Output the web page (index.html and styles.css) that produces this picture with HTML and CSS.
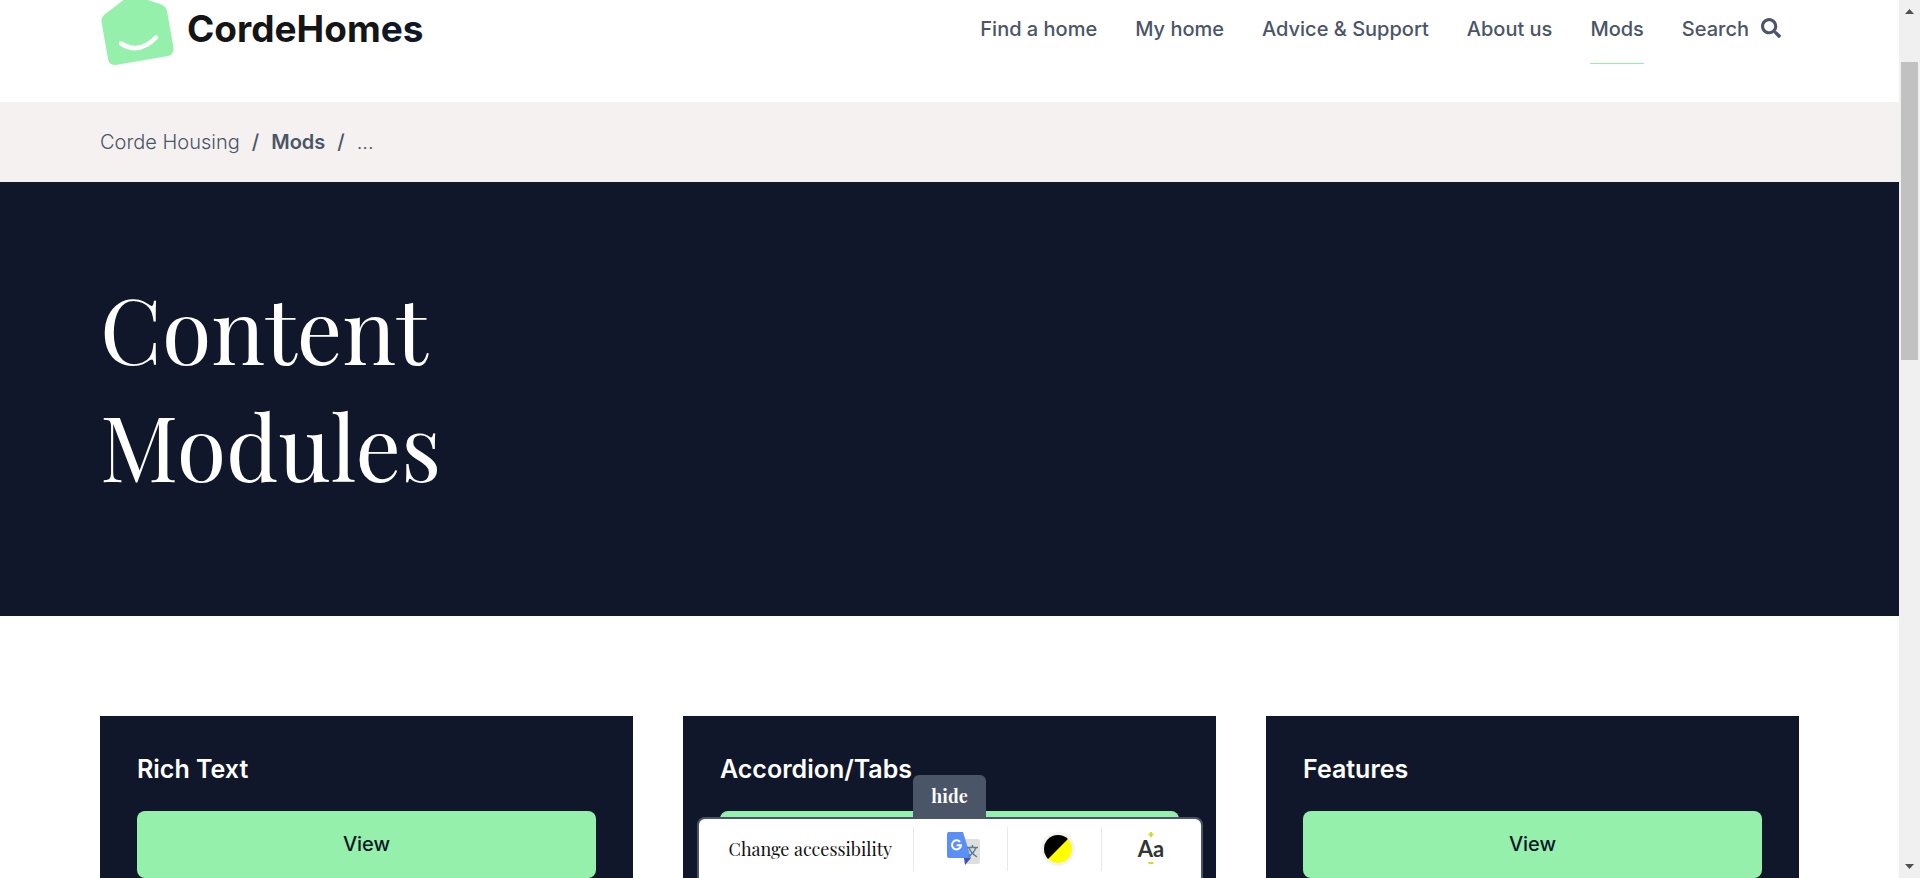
FILE: index.html
```html
<!DOCTYPE html>
<html lang="en">
<head>
<meta charset="utf-8">
<meta name="viewport" content="width=device-width, initial-scale=1">
<title>Content Modules - Corde Homes</title>
<link rel="stylesheet" href="styles.css">
</head>
<body>
<div class="page">
  <header class="header">
    <a class="logo" href="#">
      <svg class="logo-mark" viewBox="0 0 74 66" aria-hidden="true">
        <path d="M4 15 26-2Q30-5 36-4L60 4Q66 6 67 11L73.500 48Q74 54 68 56L17 64.800Q9 66 8 59L1.500 22Q1 18 4 15Z" fill="#95f0ab"/>
        <path d="M21 43.500Q39 55 56 37.500" fill="none" stroke="#fff" stroke-width="4.500" stroke-linecap="round"/>
      </svg>
      <span class="logo-text">CordeHom<span class="logo-tail">es</span></span>
    </a>
    <nav class="nav" aria-label="Main">
      <a href="#">Find a home</a>
      <a href="#">My home</a>
      <a href="#">Advice &amp; Support</a>
      <a href="#">About us</a>
      <a class="current" href="#">Mods</a>
      <a class="search" href="#">Search
        <svg viewBox="0 0 512 512" aria-hidden="true"><path fill="currentColor" d="M505 442.700 405.300 343c-4.500-4.500-10.600-7-17-7H372c27.600-35.300 44-79.700 44-128C416 93.100 322.900 0 208 0S0 93.100 0 208s93.100 208 208 208c48.300 0 92.700-16.400 128-44v16.300c0 6.400 2.500 12.500 7 17l99.700 99.700c9.400 9.400 24.600 9.400 33.900 0l28.300-28.300c9.400-9.400 9.400-24.600.1-34zM208 336c-70.700 0-128-57.200-128-128 0-70.700 57.200-128 128-128 70.700 0 128 57.200 128 128 0 70.700-57.200 128-128 128z"/></svg>
      </a>
    </nav>
  </header>
  <nav class="breadcrumb" aria-label="Breadcrumb">
    <a href="#">Corde Housing</a><b>/</b><a class="strong" href="#">Mods</a><b>/</b><span>...</span>
  </nav>
  <section class="hero"><h1>Content<br>Modules</h1></section>
  <main class="cards">
    <article class="card"><h2>Rich Text</h2><a class="button" href="#">View</a></article>
    <article class="card"><h2>Accordion/Tabs</h2><a class="button" href="#">View</a></article>
    <article class="card"><h2>Features</h2><a class="button" href="#">View</a></article>
  </main>
  <aside class="access" aria-label="Accessibility">
    <button class="hide" type="button">hide</button>
    <div class="access-bar">
      <span class="access-label">Change accessibility</span>
      <button type="button" aria-label="Translate">
        <svg width="34" height="34" viewBox="0 0 34 34">
          <path d="M12 7H31Q33 7 33 9V30Q33 32 31 32H18Z" fill="#dfdfdf"/>
          <path d="M17 26H24L18 33Z" fill="#3f51b5"/>
          <path d="M2 0H16L24 26H2Q0 26 0 24V2Q0 0 2 0Z" fill="#5a8ff5"/>
          <path d="M13 10A4.500 4.500 0 1 0 14 13.300H9.600" fill="none" stroke="#fff" stroke-width="2"/>
          <path d="M20 15.500H31M25.500 13V15.500M29 15.500Q27 21 21.500 24.500M22 16Q24 21 30 25" fill="none" stroke="#607d8b" stroke-width="1.500"/>
        </svg>
      </button>
      <button type="button" aria-label="Contrast">
        <svg width="34" height="34" viewBox="0 0 34 34">
          <circle cx="17" cy="17" r="17" fill="#f3f3f5"/>
          <circle cx="17" cy="17" r="14" fill="#ff0"/>
          <path d="M7.100 26.900A14 14 0 0 1 26.900 7.100Z" fill="#000"/>
        </svg>
      </button>
      <button type="button" aria-label="Text size">
        <svg width="34" height="34" viewBox="0 0 34 34">
          <path d="M17 0V5M14.500 2.500H19.500M14.500 31H19.500" stroke="#cddc29" stroke-width="2"/>
          <text class="aa" x="17" y="25" text-anchor="middle">Aa</text>
        </svg>
      </button>
    </div>
  </aside>
</div>
<div class="scrollbar" aria-hidden="true">
  <svg width="9" height="5" viewBox="0 0 9 5"><path d="M0 5 4.500 0 9 5Z" fill="#505050"/></svg>
  <div class="track"><div class="thumb"></div></div>
  <svg width="9" height="5" viewBox="0 0 9 5"><path d="M0 0 4.500 5 9 0Z" fill="#505050"/></svg>
</div>
</body>
</html>
```
FILE: styles.css
```css
* { box-sizing: border-box; }

body {
  display: flex;
  height: 100vh;
  margin: 0;
  overflow: hidden;
  background: #fff;
  color: #4a5568;
  font-family: Inter, "Liberation Sans", sans-serif;
  font-size: 20px;
}

a { color: inherit; text-decoration: none; }

.page { position: relative; flex: 1; min-width: 0; overflow: hidden; }

.header {
  display: flex;
  justify-content: space-between;
  align-items: flex-start;
  padding: 0 118px 36px 100px;
}

.logo { display: flex; gap: 13px; color: #151515; }
.logo-mark { width: 74px; height: 66px; }
.logo-text { font-size: 37px; font-weight: 700; line-height: 57px; }
.logo-tail { color: #10172a; }

.nav { display: flex; gap: 38px; font-weight: 500; line-height: 58px; }
.nav a { height: 64px; border-bottom: 1px solid transparent; }
.nav .current { border-color: #95f0ab; }
.search { display: flex; align-items: flex-start; gap: 12px; }
.search svg { width: 20px; height: 20px; margin-top: 18px; }

.breadcrumb {
  display: flex;
  gap: 12px;
  padding: 0 100px;
  background: #f5f1f0;
  font-weight: 300;
  line-height: 80px;
}
.breadcrumb b { font-weight: 500; }
.breadcrumb .strong { font-weight: 600; }

.hero { padding: 88px 100px 112px; background: #10172a; color: #fff; }
.hero h1 {
  margin: 0;
  font: 400 90px/117px "Playfair Display", "Liberation Serif", serif;
}

.cards {
  display: grid;
  grid-template-columns: repeat(3, 1fr);
  gap: 50px;
  padding: 100px;
}
.card { padding: 37px 37px 60px; background: #10172a; }
.card h2 {
  margin: 0 0 26px;
  color: #fff;
  font-size: 25px;
  font-weight: 600;
  line-height: 32px;
}
.button {
  display: block;
  border-radius: 8px;
  background: #95f0ab;
  color: #10172a;
  font-weight: 500;
  line-height: 67px;
  text-align: center;
}

.access {
  position: absolute;
  bottom: 0;
  left: 50%;
  display: flex;
  flex-direction: column;
  align-items: center;
  transform: translateX(-50%);
  font-family: "Playfair Display", "Liberation Serif", serif;
  font-size: 18px;
}
.access button { border: 0; background: none; font: inherit; }
.access .hide {
  padding: 0 18px;
  border-radius: 6px 6px 0 0;
  background: #4a5568;
  color: #fff;
  font-weight: 700;
  line-height: 42px;
}
.access-bar {
  display: flex;
  align-items: center;
  height: 61px;
  border: 2px solid #4a5568;
  border-bottom: 0;
  border-radius: 8px 8px 0 0;
  background: #fff;
  color: #111;
}
.access-label { width: 214px; padding-left: 30px; white-space: nowrap; }
.access-bar button {
  display: flex;
  align-items: center;
  justify-content: center;
  width: 94px;
  height: 44px;
  padding: 0 0 0 8px;
  border-left: 1px solid #e8e8ea;
}
.access-bar button:last-child { width: 100px; padding: 0; }
.aa { fill: #303634; font: 700 22px Lato, sans-serif; }

.scrollbar {
  display: flex;
  flex-direction: column;
  align-items: center;
  gap: 6px;
  width: 21px;
  padding: 9px 2px;
  background: #f0f0f0;
}
.track { flex: 1; width: 100%; padding-top: 42px; }
.thumb { height: 37.4%; min-height: 20px; background: #c1c1c1; }
```
